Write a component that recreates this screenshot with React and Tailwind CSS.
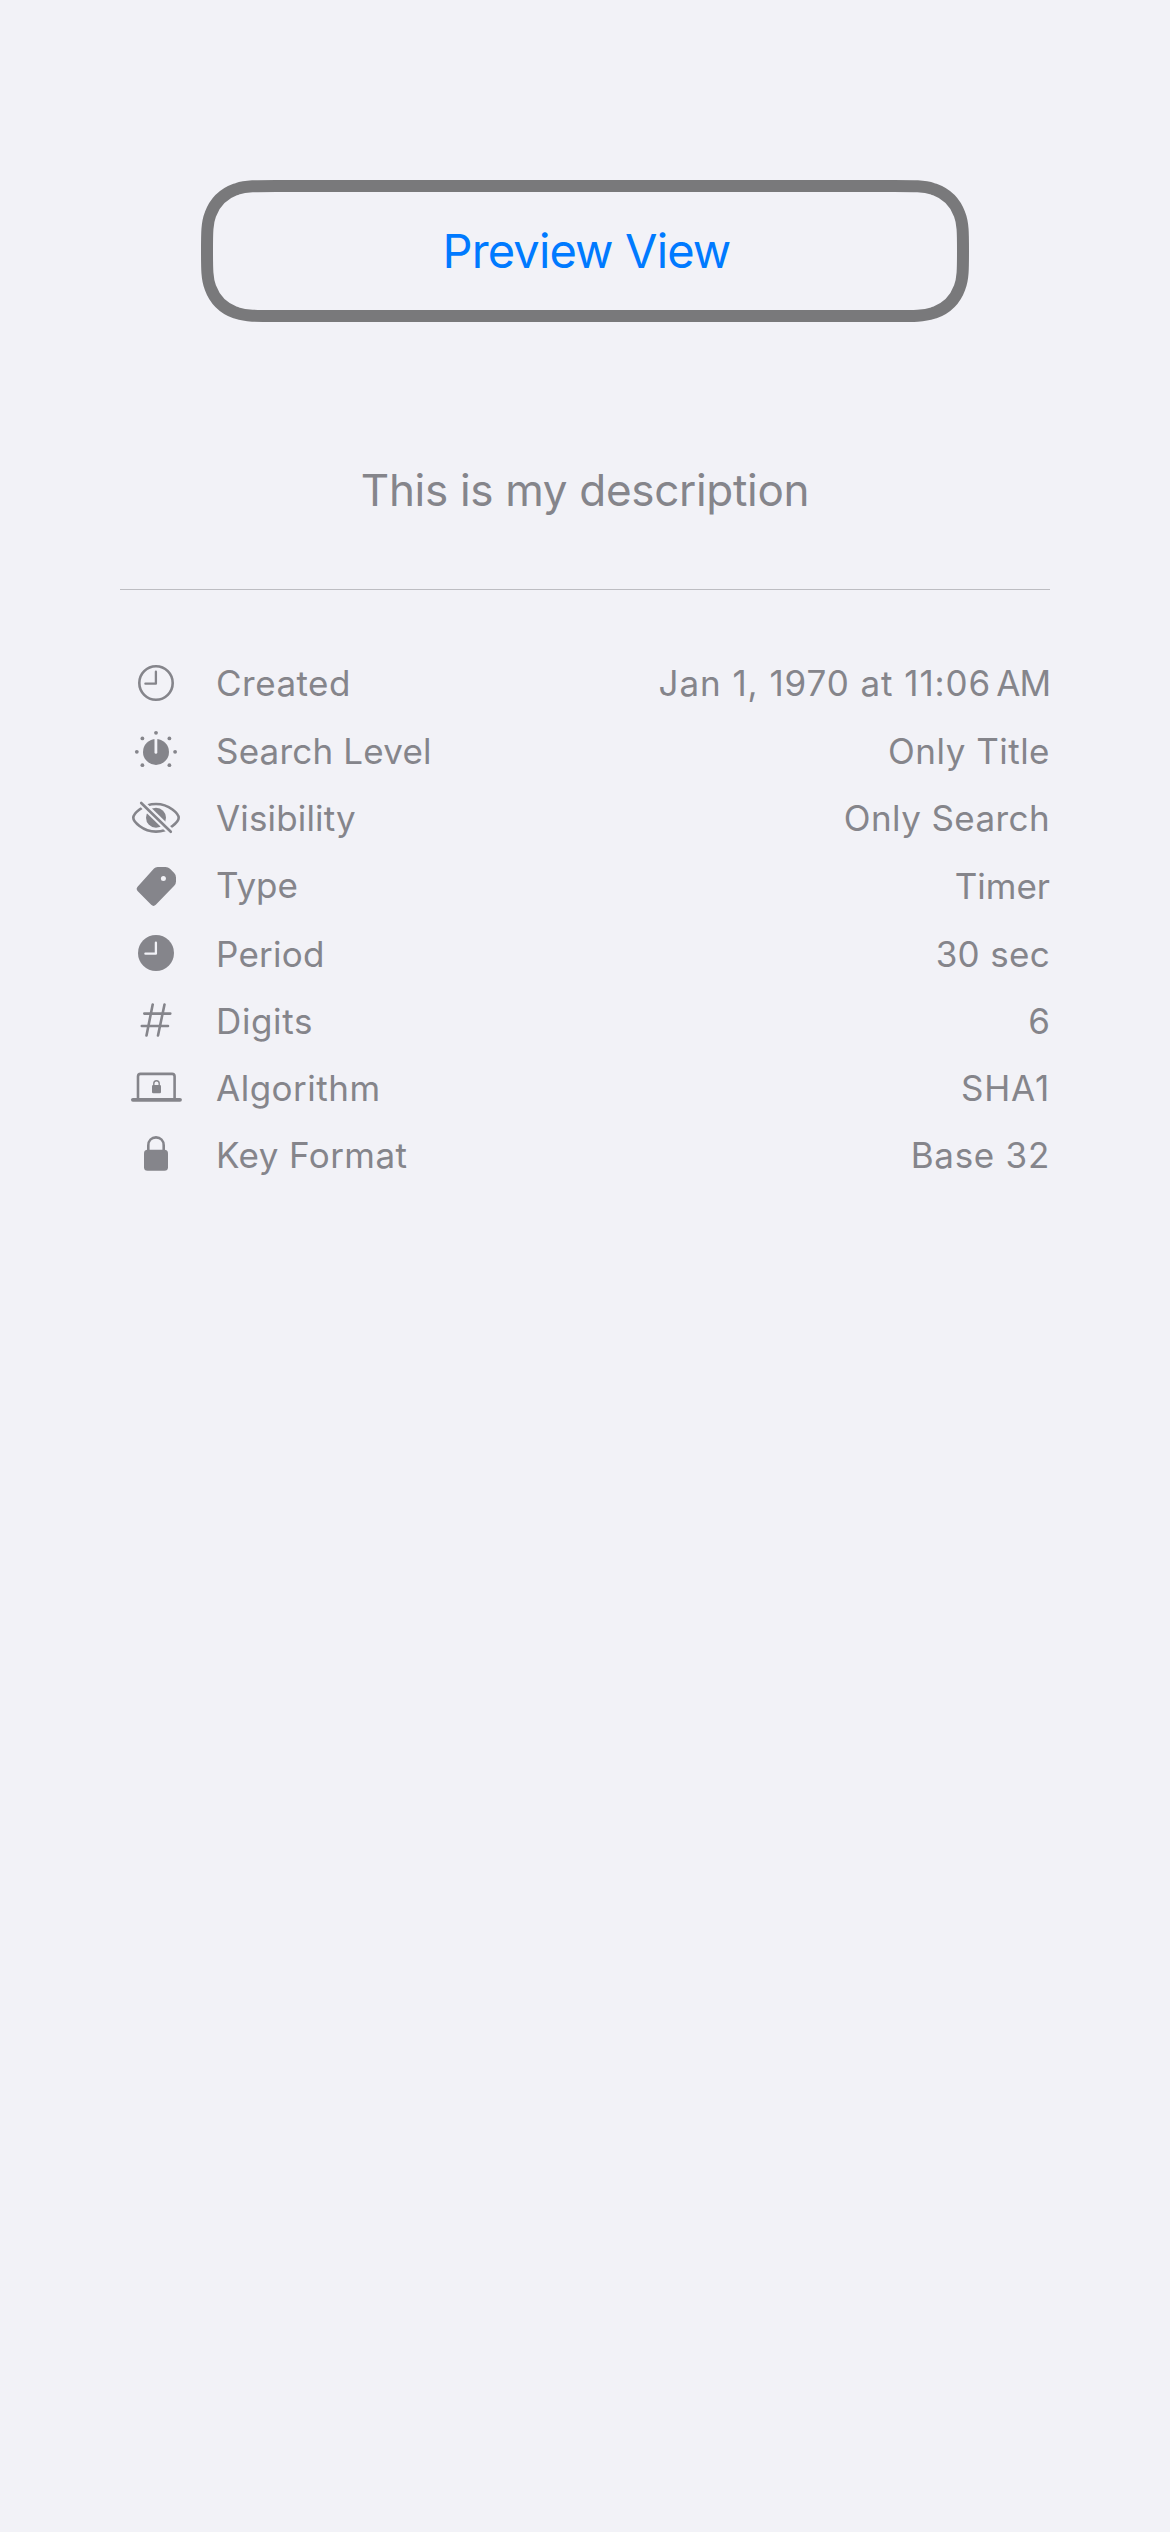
const BG = "#F2F2F7";

function IconBox({ children }) {
  return (
    <svg className="h-[66px] w-[60px] shrink-0" viewBox="0 0 60 66" fill="none" stroke="currentColor" strokeLinecap="round" strokeLinejoin="round">
      {children}
    </svg>
  );
}

const Clock = () => (
  <IconBox>
    <circle cx="30" cy="33" r="16.7" strokeWidth="2.6" />
    <path d="M29.9 21.7V33.7H19.4" strokeWidth="2.3" />
  </IconBox>
);

const ClockFill = () => (
  <IconBox>
    <circle cx="30" cy="32" r="18" fill="currentColor" stroke="none" />
    <path d="M29.9 21.7V32.7H19.4" strokeWidth="2.3" stroke={BG} />
  </IconBox>
);

const DOTS = [[30, 14.8], [16.4, 20.4], [43.4, 20.4], [10.8, 33.8], [49.1, 33.8], [16.4, 47.2], [43.4, 47.2]];

const Dial = () => (
  <IconBox>
    <g fill="currentColor" stroke="none">
      {DOTS.map(([x, y]) => <circle key={`${x}-${y}`} cx={x} cy={y} r="1.9" />)}
      <circle cx="30" cy="33.9" r="13" />
    </g>
    <path d="M29.9 19V34.4" strokeWidth="2.8" stroke={BG} />
  </IconBox>
);

const EyeSlash = () => (
  <IconBox>
    <path d="M7.3 32.8C7.3 29.3 16.3 19 30 19S52.7 29.3 52.7 32.8S43.7 46.6 30 46.6S7.3 36.3 7.3 32.8Z" strokeWidth="2.6" />
    <circle cx="30" cy="32.8" r="10" fill="currentColor" stroke="none" />
    <path d="M12 14.8L48 49.8" strokeWidth="7" stroke={BG} strokeLinecap="butt" />
    <path d="M15.2 18L44.8 46.8" strokeWidth="2.6" />
  </IconBox>
);

const Tag = () => (
  <IconBox>
    <path d="M31.6 14H39.5Q42.2 14 44 15.8L48.2 20Q50 21.8 50 24.5V28.5Q50 31 48.2 32.8L29.8 51.8Q27.5 54 25.2 51.8L11.8 38.2Q9.5 36 11.8 33.6L28 15.6Q29.4 14 31.6 14Z" fill="currentColor" stroke="none" />
    <circle cx="37.4" cy="25.6" r="2.5" fill={BG} stroke="none" />
  </IconBox>
);

const Hash = () => (
  <IconBox>
    <path d="M26.7 16.5L20.5 47.5M38.5 16.5L32 47.5M18.3 25.6H44.3M15.8 38H42" strokeWidth="2.6" />
  </IconBox>
);

const Laptop = () => (
  <IconBox>
    <path d="M12 44V21.5Q12 18.9 14.6 18.9H46Q48.6 18.9 48.6 21.5V44" strokeWidth="2.6" />
    <path d="M6.9 44.8H54" strokeWidth="3.8" />
    <rect x="26" y="30" width="9" height="8.2" rx="1.3" fill="currentColor" stroke="none" />
    <path d="M27.8 31V28.6C27.8 26.8 28.9 25.8 30.5 25.8S33.2 26.8 33.2 28.6V31" strokeWidth="1.4" />
  </IconBox>
);

const Lock = () => (
  <IconBox>
    <rect x="18" y="27.8" width="24" height="21" rx="3.6" fill="currentColor" stroke="none" />
    <path d="M22.3 29V23.5C22.3 18.5 25.6 15.4 30 15.4S37.7 18.5 37.7 23.5V29" strokeWidth="2.6" />
  </IconBox>
);

const ROWS = [
  { icon: Clock, label: "Created", value: "Jan 1, 1970 at 11:06", suffix: "AM", h: "h-[68px]", ls: "tracking-[0.49px]", vs: "tracking-[0.93px]" },
  { icon: Dial, label: "Search Level", value: "Only Title", h: "h-[67px]", ls: "tracking-[0.19px]", vs: "tracking-[0.49px]" },
  { icon: EyeSlash, label: "Visibility", value: "Only Search", h: "h-[68px]", ls: "tracking-[0.16px]", vs: "tracking-[0.4px]" },
  { icon: Tag, label: "Type", value: "Timer", h: "h-[68px]", ls: "tracking-[0px] -mt-px", vs: "tracking-[0px]" },
  { icon: ClockFill, label: "Period", value: "30 sec", h: "h-[67px]", ls: "tracking-[0.25px]", vs: "tracking-[0.32px]" },
  { icon: Hash, label: "Digits", value: "6", h: "h-[67px]", ls: "tracking-[0.64px]", vs: "tracking-[0px]" },
  { icon: Laptop, label: "Algorithm", value: "SHA1", h: "h-[67px]", ls: "tracking-[0.51px]", vs: "tracking-[0.85px]" },
  { icon: Lock, label: "Key Format", value: "Base 32", h: "h-[67px]", ls: "tracking-[0.43px]", vs: "tracking-[0.73px]" },
];

function Outline() {
  return (
    <svg className="pointer-events-none absolute inset-0 h-full w-full" viewBox="0 0 768 142" fill="none">
      <path
        d="M74.8 6H693.2C713 6 723 6 731.9 8.9L733.6 9.4C745.2 13.6 754.4 22.8 758.6 34.4C762 43 762 53 762 71C762 89 762 99 758.6 107.6C754.4 119.2 745.2 128.4 733.6 132.6L731.9 133.1C723 136 713 136 693.2 136H74.8C55 136 45 136 36.1 133.1L34.4 132.6C22.8 128.4 13.6 119.2 9.4 107.6C6 99 6 89 6 71C6 53 6 43 9.4 34.4C13.6 22.8 22.8 13.6 34.4 9.4L36.1 8.9C45 6 55 6 74.8 6Z"
        stroke="#79797B"
        strokeWidth="12"
      />
    </svg>
  );
}

export default function App() {
  return (
    <main className="flex h-[2532px] w-[1170px] flex-col items-center bg-[#F2F2F7] pt-[180px] font-[Inter,sans-serif] text-[#85858B]">
      <button className="relative flex h-[142px] w-[768px] items-center justify-center text-[47px] leading-[142px] tracking-[-0.86px] text-[#007AFF]">
        <Outline />
        <span className="pl-[3px]">Preview View</span>
      </button>
      <p className="mt-[138px] h-[60px] text-[44px] leading-[60px] tracking-[-0.31px]">This is my description</p>
      <hr className="mt-[69px] h-px w-[930px] border-0 bg-[#BDBDC2]" />
      <dl className="mt-[60px] w-[930px] text-[35px] leading-[66px]">
        {ROWS.map(({ icon: Icon, label, value, suffix, h, ls, vs }) => (
          <div key={label} className={`flex items-start whitespace-nowrap pl-[6px] ${h}`}>
            <Icon />
            <dt className={`ml-[30px] ${ls}`}>{label}</dt>
            <dd className={`ml-auto flex ${vs}`}>
              {value}
              {suffix && <span className="ml-[5px] tracking-[-1px]">{suffix}</span>}
            </dd>
          </div>
        ))}
      </dl>
    </main>
  );
}
